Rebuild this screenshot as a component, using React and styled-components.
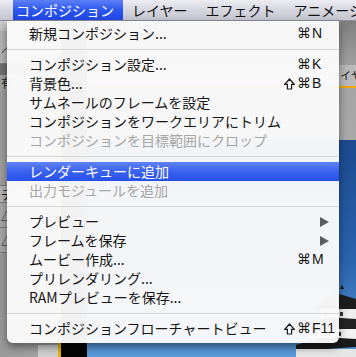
import React from 'react';
import styled, { createGlobalStyle } from 'styled-components';

const Global = createGlobalStyle`
  html, body { margin: 0; padding: 0; width: 356px; height: 357px; overflow: hidden; }
  body { font-family: "Noto Sans CJK JP", "Noto Sans", sans-serif; }
  #root { width: 356px; height: 357px; }
`;

const Screen = styled.div`
  position: relative;
  width: 356px;
  height: 357px;
  overflow: hidden;
  display: flex;
  flex-direction: column;
  background: #8a8a8a;
`;

const MenuBar = styled.div`
  height: 21px;
  flex: none;
  display: flex;
  align-items: stretch;
  padding-left: 13px;
  background: linear-gradient(#ececf2, #d4d4de 55%, #c6c6d2);
  border-bottom: 1px solid #8e8e98;
  box-sizing: border-box;
  font-size: 14px;
  line-height: 21px;
  color: #111;
  white-space: nowrap;
`;

const BarItem = styled.div`
  padding: ${p => (p.$first ? '0 9px 0 3px' : '0 9px')};
  color: ${p => (p.$open ? '#fff' : '#111')};
  background: ${p => (p.$open ? 'linear-gradient(#5d80f7, #2d56ee 50%, #1f47e6)' : 'transparent')};
`;

const Workspace = styled.div`
  flex: 1;
  display: flex;
  min-height: 0;
`;

const LeftPanel = styled.div`
  width: 58px;
  flex: none;
  display: flex;
  flex-direction: column;
  background: linear-gradient(90deg, #9a9a9a, #a6a6a6);
  font-size: 12px;
  color: #222;
`;

const PanelBand = styled.div`
  height: ${p => p.$h}px;
  flex: none;
  background: ${p => p.$bg || 'transparent'};
  border-bottom: ${p => (p.$line ? '1px solid #7c7c7c' : 'none')};
  line-height: ${p => p.$h}px;
  padding-left: 1px;
  box-sizing: border-box;
`;

const PanelFill = styled.div`
  flex: 1;
  display: flex;
  justify-content: flex-end;
  align-items: flex-end;
`;

const Chip = styled.div`
  width: 20px;
  height: 12px;
  background: #cfcfcf;
`;

const YellowLine = styled.div`
  width: 3px;
  flex: none;
  background: #e6b100;
`;

const BlackPane = styled.div`
  width: 26px;
  flex: none;
  background: #050505;
`;

const Viewer = styled.div`
  flex: 1;
  display: flex;
  flex-direction: column;
  min-width: 0;
  overflow: hidden;
`;

const ViewerTop = styled.div`
  height: 119px;
  flex: none;
  display: flex;
  flex-direction: column;
  background: linear-gradient(#7f7f7f, #a3a3a3 40%, #a9a9a9);
`;

const TopSpacer = styled.div`
  height: 44px;
  flex: none;
`;

const TabRow = styled.div`
  height: 21px;
  flex: none;
  background: #b9b9b9;
  border-bottom: 2px solid #f0a800;
  font-size: 11px;
  line-height: 21px;
  color: #222;
  padding-left: 242px;
  white-space: nowrap;
  overflow: hidden;
`;

const Sky = styled.div`
  flex: 1;
  position: relative;
  background: linear-gradient(#1b4a8f, #2a63ad 55%, #5a9bd9);
  overflow: hidden;
`;

const CastleSvg = styled.svg`
  position: absolute;
  right: 0;
  bottom: 0;
`;

const Menu = styled.div`
  position: absolute;
  left: 7px;
  top: 21px;
  width: 332px;
  padding: 3px 0 5px;
  box-sizing: border-box;
  background: rgba(250, 250, 250, 0.97);
  border-radius: 0 0 6px 6px;
  box-shadow: 0 4px 9px rgba(0, 0, 0, 0.45);
  font-size: 14px;
  color: #161616;
`;

const Row = styled.div`
  height: 19px;
  display: grid;
  grid-template-columns: 1fr auto 23px;
  align-items: center;
  padding: 0 4px 0 22px;
  line-height: 19px;
  white-space: nowrap;
  color: ${p => (p.$disabled ? '#a6a6a6' : p.$active ? '#fff' : '#161616')};
  background: ${p => (p.$active ? 'linear-gradient(#5f82f6, #3a62ef 50%, #2650ea)' : 'transparent')};
`;

const Mods = styled.span`
  display: flex;
  align-items: center;
  justify-content: flex-end;
  gap: 2px;
  padding-right: 1px;
`;

const Cmd = styled.span`
  font-family: "DejaVu Sans", sans-serif;
  font-size: 14px;
  line-height: 19px;
`;

const ShiftIcon = styled.svg`
  display: block;
`;

const Key = styled.span`
  font-family: "Liberation Sans", sans-serif;
  font-size: 14px;
`;

const Arrow = styled.span`
  width: 0;
  height: 0;
  margin-left: 8px;
  border-left: 9px solid #5c5c5c;
  border-top: 5px solid transparent;
  border-bottom: 5px solid transparent;
`;

const Separator = styled.div`
  height: 12px;
  display: flex;
  align-items: center;
  &::after {
    content: '';
    flex: 1;
    height: 1px;
    background: #d7d7d7;
  }
`;

const items = [
  { label: '新規コンポジション...', cmd: true, key: 'N' },
  { sep: true },
  { label: 'コンポジション設定...', cmd: true, key: 'K' },
  { label: '背景色...', shift: true, cmd: true, key: 'B' },
  { label: 'サムネールのフレームを設定' },
  { label: 'コンポジションをワークエリアにトリム' },
  { label: 'コンポジションを目標範囲にクロップ', disabled: true },
  { sep: true },
  { label: 'レンダーキューに追加', active: true },
  { label: '出力モジュールを追加', disabled: true },
  { sep: true },
  { label: 'プレビュー', submenu: true },
  { label: 'フレームを保存', submenu: true },
  { label: 'ムービー作成...', cmd: true, key: 'M' },
  { label: 'プリレンダリング...' },
  { label: 'RAMプレビューを保存...' },
  { sep: true },
  { label: 'コンポジションフローチャートビュー', shift: true, cmd: true, key: 'F11' },
];

function Shift() {
  return (
    <ShiftIcon width="11" height="12" viewBox="0 0 11 12">
      <path d="M5.5 1 L10.2 6.3 H7.6 V11 H3.4 V6.3 H0.8 Z" fill="none" stroke="#1a1a1a" strokeWidth="1.2" strokeLinejoin="miter" />
    </ShiftIcon>
  );
}

function Castle() {
  return (
    <CastleSvg width="60" height="72" viewBox="0 0 60 72">
      <path d="M22 20 L40 8 L60 14 L60 24 L16 26 Z" fill="#1d1d1d" />
      <rect x="24" y="24" width="36" height="10" fill="#efefef" />
      <rect x="28" y="27" width="3" height="4" fill="#333" />
      <rect x="36" y="27" width="3" height="4" fill="#333" />
      <rect x="44" y="27" width="3" height="4" fill="#333" />
      <path d="M10 40 L30 32 L60 34 L60 44 L4 46 Z" fill="#222" />
      <rect x="12" y="44" width="48" height="10" fill="#f2f2f2" />
      <rect x="18" y="47" width="3" height="4" fill="#333" />
      <rect x="30" y="47" width="3" height="4" fill="#333" />
      <rect x="42" y="47" width="3" height="4" fill="#333" />
      <path d="M0 60 L26 52 L60 54 L60 62 L0 66 Z" fill="#1a1a1a" />
      <rect x="0" y="64" width="60" height="8" fill="#e6e6e6" />
      <path d="M44 4 L46 0 L48 4 Z" fill="#111" />
    </CastleSvg>
  );
}

export default function App() {
  return (
    <>
      <Global />
      <Screen>
        <MenuBar>
          <BarItem $first $open>コンポジション</BarItem>
          <BarItem>レイヤー</BarItem>
          <BarItem>エフェクト</BarItem>
          <BarItem>アニメーション</BarItem>
        </MenuBar>
        <Workspace>
          <LeftPanel>
            <PanelBand $h={10} $bg="linear-gradient(#d0d0d0, #bdbdbd)" />
            <PanelBand $h={33} $bg="#b4b4b4" $line>／</PanelBand>
            <PanelBand $h={11} $bg="#6f6f6f" />
            <PanelBand $h={16} $bg="#a3a3a3">有</PanelBand>
            <PanelBand $h={95} $bg="#9e9e9e" $line />
            <PanelBand $h={17} $bg="#b3b3b3" $line>デ</PanelBand>
            <PanelBand $h={25} $bg="#a8a8a8" $line>△</PanelBand>
            <PanelBand $h={25} $bg="#a8a8a8" $line>△</PanelBand>
            <PanelFill>
              <Chip />
            </PanelFill>
          </LeftPanel>
          <YellowLine />
          <BlackPane />
          <Viewer>
            <ViewerTop>
              <TopSpacer />
              <TabRow>レイヤー</TabRow>
            </ViewerTop>
            <Sky>
              <Castle />
            </Sky>
          </Viewer>
        </Workspace>
        <Menu>
          {items.map((it, i) =>
            it.sep ? (
              <Separator key={i} />
            ) : (
              <Row key={i} $disabled={it.disabled} $active={it.active}>
                <span>{it.label}</span>
                <Mods>
                  {it.shift && <Shift />}
                  {it.cmd && <Cmd>⌘</Cmd>}
                </Mods>
                {it.submenu ? <Arrow /> : <Key>{it.key || ''}</Key>}
              </Row>
            )
          )}
        </Menu>
      </Screen>
    </>
  );
}
